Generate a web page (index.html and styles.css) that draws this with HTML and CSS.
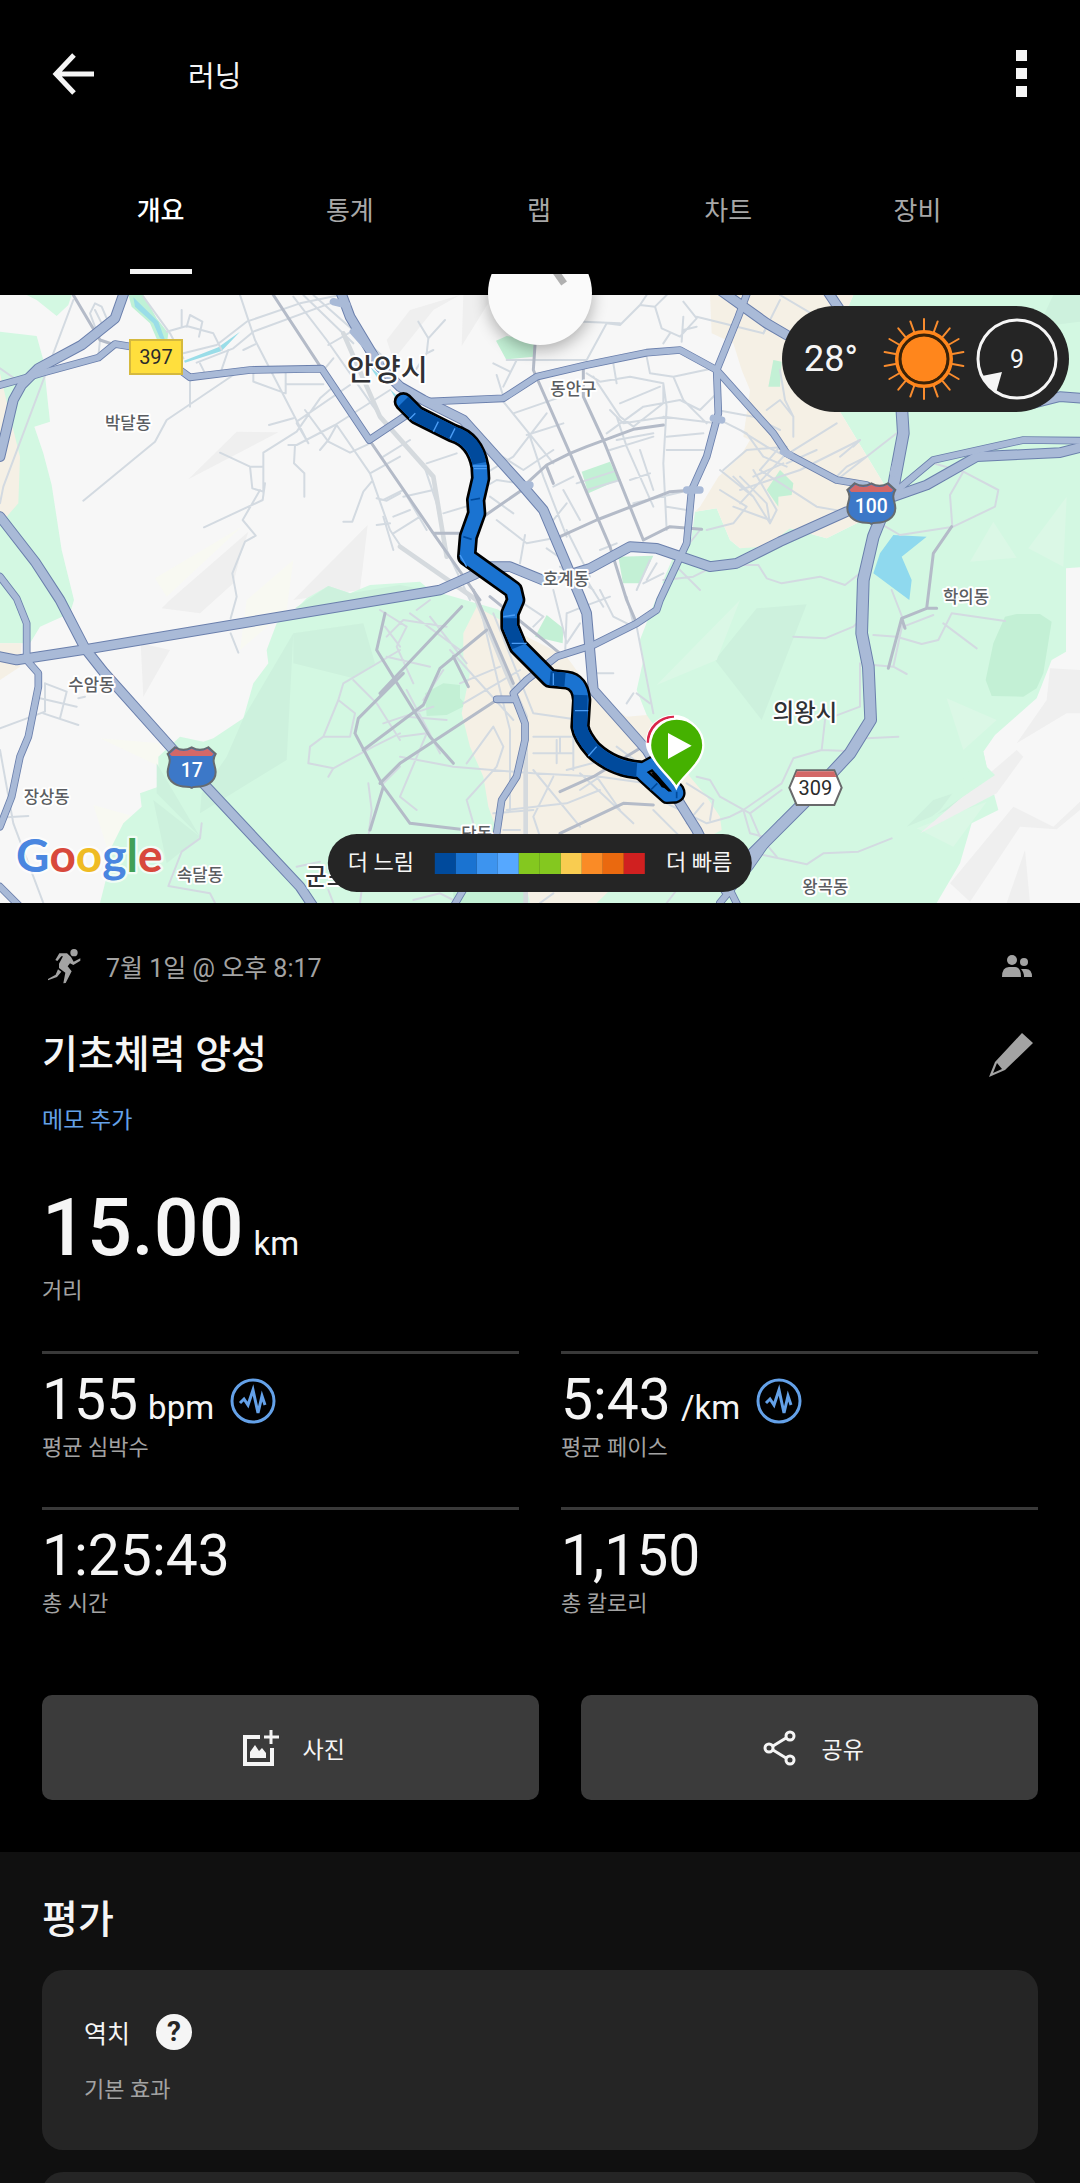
FILE: index.html
```html
<!DOCTYPE html>
<html lang="ko">

<head>
    <meta charset="UTF-8">
    <meta name="viewport" content="width=device-width, initial-scale=1.0">
    <title>러닝</title>
    <link rel="stylesheet" href="styles.css">
</head>

<body>
    <header class="topbar">
        <button class="icon-btn" type="button" aria-label="뒤로">
            <svg width="44" height="44" viewBox="0 0 44 44"><path d="M42 22H5M22 3L4 22l18 19" fill="none" stroke="#f5f5f5" stroke-width="5"/></svg>
        </button>
        <h1>러닝</h1>
        <button class="icon-btn more" type="button" aria-label="더보기">
            <svg width="12" height="48" viewBox="0 0 12 48" fill="#f5f5f5"><path d="M0 0h11v11H0zM0 18h11v11H0zM0 36h11v11H0z"/></svg>
        </button>
    </header>
    <nav class="tabs">
        <a class="active" href="#overview">개요</a>
        <a href="#stats">통계</a>
        <a href="#laps">랩</a>
        <a href="#charts">차트</a>
        <a href="#gear">장비</a>
    </nav>

    <div class="map">
        <svg class="map-canvas" viewBox="0 15 3240 1824" role="img" aria-label="지도">
            <defs>
                <g id="wide">
                    <path d="M375 0L345 85 245 165 115 235 65 285 40 330 0 500"/>
                    <path d="M0 680L105 815 180 930 255 1075 310 1145 520 1380 610 1480 900 1790 940 1850"/>
                    <path d="M0 1100L50 1110 260 1078 1200 920 1320 900 1420 855 1470 830 1530 830 1640 875 1770 835 1890 770 1970 775 2130 830 2210 820 2340 755 2540 665"/>
                    <path d="M1020 0L1050 80 1140 230 1200 290 1270 330 1390 390 1570 590 1630 660 1740 920 1760 970 1780 1200 1940 1380 2090 1620 2150 1740"/>
                    <path d="M2160 0L2300 100 2360 135M2480 0L2520 60"/>
                    <path d="M3100 340L3180 320 3250 325M2680 620L2780 585 2930 500 3180 488 3250 470"/>
                </g>
                <g id="road">
                    <path d="M0 285L55 270 130 248 295 203 345 162 395 170 540 240 570 262 750 240 965 236 1108 450 1220 375"/>
                    <path d="M1280 335L1510 325 1610 260 1760 225 1940 188 2040 180 2150 240 2320 430 2360 490 2510 570 2600 585"/>
                    <path d="M2245 0L2215 80 2150 240 2155 370 2120 500 2075 600 2060 760 1980 930 1970 960 1910 1000 1780 1065 1670 1100 1580 1170 1540 1210 1575 1300 1575 1350 1550 1460 1505 1530 1490 1630 1360 1850"/>
                    <path d="M0 860L50 925 80 1000 80 1110 115 1150 115 1190 85 1340 60 1400 35 1520 0 1610M0 1790L60 1850M1490 1228h50"/>
                    <path d="M2680 610L2800 510 3070 450 3250 452"/>
                    <path d="M2340 1600L2250 1730 2160 1838M2190 1800L2215 1850"/>
                </g>
                <path id="motorway" d="M2705 350L2710 430 2680 590 2620 740 2590 870 2585 1030 2605 1130 2612 1290 2550 1390 2420 1530 2260 1690 2180 1800"/>
                <path id="track" d="M1210 335L1250 375 1360 430Q1425 450 1440 530L1442 565 1427 630 1430 670 1405 740 1400 800 1470 850 1540 900 1547 930 1530 970 1530 1010 1555 1070 1650 1165 1700 1170Q1740 1175 1745 1230L1740 1310Q1745 1340 1780 1380 1840 1435 1920 1440"/>
                <path id="loop" d="M1920 1448L1955 1480 2000 1520 2025 1519Q2040 1515 2032 1500L1960 1418 1920 1440"/>
            </defs>

            <rect y="15" width="3240" height="1824" fill="#f7f7f7"/>
            <!-- 지형 음영 -->
            <g fill="#efefef">
                <path d="M565 568L710 425 835 427ZM510 930L745 725 720 800 700 880 600 970 485 955ZM880 930L1103 705 1080 900ZM1160 150L1230 60 1380 15 1300 60 1180 210ZM1385 168L1390 15H1480ZM422 1060L510 1080 430 1220Z"/>
            </g>
            <path fill="#f8f9f2" d="M465 865L725 710 500 920ZM740 930L880 810 860 960 720 1080ZM280 1545L440 1590 330 1700ZM300 1345L480 1360 480 1430Z"/>

            <!-- 녹지 -->
            <g fill="#d3f8e2">
                <path d="M80 15H215L205 45 170 78 110 30ZM0 125L110 138 130 210 150 395 103 410 130 490 155 585 185 780 222 930 210 970 120 1010 90 1060H0Z"/>
                <path d="M920 925L985 888 1050 910 1110 885 1260 875 1290 900 1500 960 1600 1000 1900 1100 1990 870 2020 800 2075 740 2085 665 2150 655 2190 750 2220 775 2370 715 2480 745 2590 690 2650 580 2520 365 2480 200 2560 15H3240V832L3198 835V1085L3155 1110 3110 1225 2985 1335 2950 1385 2960 1430 2995 1560 2915 1600 2880 1720 2810 1839H300L325 1740 330 1680 370 1600 425 1550 420 1510 475 1490V1400L540 1340 610 1355 640 1345 730 1285 760 1180 805 1120 800 1080 830 1000 885 960Z"/>
            </g>
            <g fill="#cdf1dd">
                <path d="M885 955L985 888 1050 910 1200 885 1280 900 1100 930ZM880 1030L1090 1000 1125 1120 1060 1165 880 1120ZM880 1030L860 1410 600 1570 605 1510 680 1400 730 1285ZM470 1420L600 1640 470 1510ZM460 1530L600 1640 500 1720Z"/>
                <path d="M2145 1110L2270 955 2420 943 2285 1290ZM3115 110L3160 15H3240V95ZM2720 1610L2800 1530 2980 1470 2990 1500Z"/>
                <path fill="#dbf8e6" d="M2910 815L2980 695 3050 803ZM3085 775L3200 620 3190 830ZM2840 1225L2990 1290 2890 1380ZM2750 1615L2960 1535 2860 1670ZM1970 1185L2220 930 2150 1110Z"/>
            </g>
            <g fill="#c3f0d5">
                <path d="M1745 545L1830 515 1855 570 1765 610ZM1488 152L1520 138 1610 150 1600 200 1518 208ZM1855 800L1960 797 1920 880 1875 915Z"/>
                <path d="M1275 1210L1330 1180 1380 1185V1225L1400 1245 1340 1275 1280 1278ZM3015 980L3050 972H3120L3155 995 3130 1150 3110 1195 3070 1220 2975 1218 2957 1170 2980 1060Z"/>
            </g>
            <path fill="#bff1d6" d="M385 15H430L470 85 505 130 500 165H478L450 100 395 50Z"/>

            <!-- 시가지 -->
            <g fill="#f5f0e5">
                <path d="M0 250L40 420 60 500 55 640 20 680H0ZM0 1060H65L60 1130 0 1170Z"/>
                <path d="M2130 15L2135 130 2200 160 2225 240 2250 300 2230 440 2250 450 2220 500 2155 560 2100 650 2085 665 2150 655 2190 750 2220 775 2300 770 2370 715 2480 745 2590 690 2650 580 2520 365 2480 200 2560 15Z"/>
                <path d="M1430 950L1390 1030V1100L1410 1150 1385 1270 1410 1370 1450 1460 1465 1550 1490 1620 1560 1700 1590 1839H1790L1830 1800 2165 1620 2160 1580 2120 1520 2070 1460 1940 1275 1700 1100Z"/>
            </g>
            <path fill="#f7f7f7" d="M1470 930L1600 880H2000L1910 1010 1930 1110 1910 1200 1940 1275 1880 1280 1780 1210 1700 1100 1560 1030Z"/>
            <path fill="#c3f0d5" d="M1640 975L1690 1015 1688 1060 1605 1040ZM2340 540L2380 580 2375 615 2335 620V650L2300 600ZM2320 210L2345 215 2340 290H2305Z"/>
            <path fill="#c3f0d5" d="M1360 1839V1800H1575V1839Z"/>
            <path fill="#efefef" d="M3050 1360L3140 1230 3150 1135 3240 1140V1270H3200ZM2760 1630L3050 1380 3070 1400 2990 1510ZM2850 1780L3040 1550 3160 1610 3240 1535V1560L3170 1618 3060 1610 2910 1835ZM3020 1839L3075 1680 3090 1839Z"/>
            <path fill="#d3f8e2" d="M2750 1615L2985 1455 2960 1430 2950 1385 2820 1560Z"/>

            <!-- 물 -->
            <path fill="#9adde8" d="M400 22L475 95 495 150 480 145 460 100 405 50ZM552 212L655 172 720 125 665 183 555 218ZM1110 230L1145 260 1135 268ZM1170 298L1205 330 1195 340Z"/>
            <path fill="#8fd9ee" d="M2680 735L2780 740 2705 800 2735 870 2728 930 2620 850 2640 790Z"/>

            <!-- 골목길 -->
            <g class="lane">
                <path d="M220 30L10 590 0 640M0 235L50 270M430 20L510 130 550 205M545 60V110M500 125L560 108 640 130 665 180M560 110L570 75 607 95 597 140M300 150L270 70 285 40 305 50 320 85M285 60L310 110M300 150L295 200M550 190L650 165 740 95 900 40 1020 15M590 218L700 175 760 125 990 40"/>
                <path d="M720 15L765 150 925 460 890 400M730 180L765 163M665 238L685 180M600 220L615 250M700 255L500 390 465 455 250 632M570 262V350M760 230V275L857 310V250M860 283H970M660 488L750 530H790M750 530L757 595 790 605M795 580L788 630 612 712M790 610V488L890 425 960 325 1000 290M780 600L728 690 767 737 735 755 697 850 710 920 692 985M692 1030L715 1088M807 405L880 385M865 465H890L1005 405 1170 300M885 465L882 520 913 550V620M890 395L1050 285M915 360L985 455 1050 488 1110 460M960 480L985 450 1010 405 1110 550 1170 720 1200 765M1110 550L1200 500M1115 575L1090 605 1057 695H1030M1130 625L1160 632 1200 610M1130 705L1170 700"/>
                <path d="M880 20L980 150 1120 350 1200 450 1270 520 1310 640 1340 780 1410 930M910 15L1060 160M975 235L1000 205M985 165L1080 110M940 15L1150 200"/>
                <path d="M1255 95L1285 145 1335 90M1285 145L1280 190 1300 180M1280 190L1240 250M1480 220L1530 245M1490 255L1510 320M1550 210L1510 290M1520 210H1760L1820 100 1860 105 1920 45 1940 15M1750 95L1860 100M1920 45L1965 50 2005 10M1965 50L1985 115 2040 140 2090 85 2050 35M1990 160L2010 130M2045 155L2050 80M2090 80L2290 130 2310 90M2050 120L2090 110"/>
                <path d="M1510 335L1660 520M1580 435L1690 400M1540 370L1670 325M1640 370L1540 500 1440 560M1660 480L1570 540 1460 470M1590 440L1630 560 1700 740M1660 590L1720 560M1690 600L1740 690M1700 640L1660 690"/>
                <path d="M1780 260L1860 380 1900 410 1990 340 1990 280 1890 260 1800 275 1760 250M1860 340L1980 290M1850 380L1880 470 1960 650M1820 430L1930 350 2040 330 2100 360 2150 310M1830 360L1870 400 2000 380M1850 450L1960 430M1830 480L1960 440M1990 280L2000 350 1990 520 2000 720M1940 200L1950 250 2020 260 2140 235M1990 380L2150 400M2000 440L2110 430M2000 480H2110M2020 260L2050 330 2120 400M1890 570L1950 550M1900 640L2070 600M1920 480L1960 600M2000 650L2060 660M1840 220L1850 280M1730 580L1840 545M1760 600L1860 570"/>
                <path d="M2140 380L2240 430 2290 500 2360 530M2150 360L2260 380 2340 420M2170 540L2240 480 2360 470M2160 540L2260 620 2310 700 2330 660 2260 540M2160 600L2240 650 2200 700 2120 720M2200 560L2260 620M2200 650L2310 690M2290 130L2340 30M2340 15L2450 80M2340 240L2355 330 2380 380 2380 440M2300 360L2340 330 2380 380M2220 420L2300 470 2340 490M2220 640L2350 500 2510 400M2360 520L2450 480M2220 560L2300 640 2310 700M2220 600L2400 540 2580 450M2500 570L2540 530 2600 500M2510 570L2690 430M2560 470L2580 450"/>
                <path d="M1150 630L1210 600 1280 720M1150 500L1230 450M1280 520L1370 490M1150 680L1180 780M1210 620L1300 600M1180 680L1230 660M1180 730L1260 680M1330 670L1430 640M1440 600L1490 570 1560 580M1470 620L1540 670M1490 690L1580 760 1660 745M1575 735L1560 820M1640 775L1690 810M1700 720L1770 860M1680 830L1780 900M1760 870L1810 950M1800 780L1850 760M1950 810L1910 900M1970 820L1940 870M1990 850L1930 880M2340 470L2280 540"/>
                <path d="M2100 720L2020 820 2100 900M1990 870L2080 860 2140 830M2220 825H2275L2300 865 2345 880 2460 860 2535 885 2580 850M2260 560L2350 520M2580 450L2520 500M2640 700L2700 735 2860 710 2985 650 2995 600 2890 545 2850 615 2857 710M2890 545L2800 520M2280 540L2450 650 2560 670"/>
                <path d="M2380 1040L2475 1045 2560 1010 2590 980M2620 1035L2690 1040 2765 1062 2815 1050 2855 970 3015 993M2830 1000L2930 1075M2620 1125L2680 1130 2720 1152M2675 900L2710 990 2680 1130M2710 1010L2800 975M2580 1120V1250L2500 1280M2475 1290L2465 1380 2540 1383M2465 1380L2380 1405 2345 1480 2230 1560 2250 1630 2290 1640M2600 1345L2695 1340M2290 1695L2420 1723 2470 1690 2575 1685 2675 1645"/>
                <path d="M135 1180L200 1205 180 1285M120 1225L230 1250M130 1270L235 1305M135 1180V1265L0 1315M235 1225L255 1220M0 1380L40 1600 130 1839M20 1582L85 1578M605 1600L600 1645 545 1685 505 1788 630 1810 645 1839M890 1730L960 1715M985 1800L1000 1839"/>
                <path d="M1200 1080L1030 1180 1015 1230 970 1340 930 1370 925 1420 1000 1435 1120 1370 1200 1330M970 1340H1050L1065 1270 1015 1230M1060 1170L1130 1240 1200 1350M1000 1435L985 1460M1155 1010L1200 1070M1105 1480L1115 1560 1080 1839M1150 1480L1200 1430"/>
                <path d="M1140 960L1220 1010 1190 1070 1240 1180M1160 1040L1210 990 1340 1010M1250 960L1290 930M1230 970L1380 1080M1290 980L1400 1120M1160 1100L1290 1130M1330 1140L1270 1230M1380 1180L1500 1130M1390 1240L1560 1140M1150 1300L1300 1250M1160 1330L1220 1280 1340 1290M1200 1340L1280 1330 1200 1520 1250 1560M1400 1420L1480 1310 1510 1370 1490 1430 1400 1530 1420 1600M1200 1400L1360 1430 1600 1450 1800 1460 1940 1480M1220 1200L1320 1390M1440 950L1500 1200 1530 1320 1530 1560M1480 970L1600 1270M1350 1080L1540 1290M1600 1340H1760M1600 1390H1720M1670 1350V1420M1680 1390V1340H1720V1440M1600 1270L1740 1290M1600 1440L1740 1610M1660 1460L1600 1580 1620 1640M1700 1440L1850 1400M1740 1450L1900 1600M1790 1460L1860 1560M1800 1460L1740 1500M1520 1560L1700 1540 1800 1500M1480 1570L1600 1560M1510 1620H1560M1850 1370L1930 1430M1880 1420L2000 1540 2120 1600 2190 1580 2230 1560M1960 1560L2040 1640M2060 1480L2140 1530 2130 1590M2090 1460L2130 1470 2160 1520 2250 1570M2060 1600L2110 1540M2250 1570L2280 1640 2330 1700"/>
                <path d="M1570 940L1630 980 1600 1010M1660 900L1700 1060 1740 1000M1700 970L1750 950 1830 920M1700 970L1695 1100M1800 900L1840 980 1900 1010M1880 920L1900 1000M1910 1010L1960 1270M1790 1150H1840M1910 1210L1950 1240M1880 1240L1900 1210M1720 1180L1780 1220M1240 1830L1320 1810 1360 1830M1620 1839L1660 1810M2000 1839L2030 1800M2250 1570L2345 1500"/>
            </g>
            <path class="rail" d="M1200 770L1430 930 1520 1150 1577 1280V1839M1030 130L1140 380 1300 560 1340 800"/>

            <!-- 간선도로 -->
            <g class="street">
                <path d="M220 15L300 150 345 165M820 15L965 236M1108 450L1300 730 1440 930M1300 730H1400M1605 165L1600 240 1710 490 1830 770 1880 930 1910 1000M1750 225V320L1810 450 1930 750M1580 580L1640 525 1710 490 1760 470 1900 418 1990 405M1450 680L1580 590M1680 740L1790 690 2010 605 2080 600M1930 750L2010 710 2105 718M1640 530L1660 580"/>
                <path d="M1155 970L1130 1080 1290 1340 1360 1420M1140 1210L1385 950M1065 1330L1075 1285 1210 1150M1065 1330L1150 1490 1230 1600 1400 1620M1090 1380L1270 1245 1320 1135 1460 1020M1140 1480L1200 1420 1490 1230M1150 1490L1110 1620M1420 900L1540 1180M1470 920L1680 1090M1680 1630L1870 1540 1960 1545M1680 1505L1780 1460 1920 1375M1360 1100L1405 1190M2855 710L2800 790 2780 955 2705 985 2665 1135M2780 955H2810M2705 985L2715 1015"/>
            </g>

            <use class="wide-edge" href="#wide"/>
            <use class="road-edge" href="#road"/>
            <use class="motorway-edge" href="#motorway"/>
            <use class="wide-fill" href="#wide"/>
            <use class="road-fill" href="#road"/>
            <use class="motorway-fill" href="#motorway"/>
            <path class="ramp" d="M1060 125L1140 215M1000 35L1040 45M1565 585H1590M2140 385L2165 390M2060 600H2100M2350 485L2370 495M2680 550L2690 515"/>

            <!-- 달린 경로 -->
            <use class="track-edge" href="#track"/>
            <use class="loop-edge" href="#loop"/>
            <use class="track-fill" href="#track"/>
            <use class="loop-fill" href="#loop"/>
            <path d="M1952 1446L1968 1450 2006 1498 1985 1492Z"/>
            <path class="track-slow" d="M1210 335L1250 375 1360 430Q1425 450 1438 520M1530 985V1010L1555 1070M1650 1165L1695 1169M1742 1215L1740 1310Q1745 1340 1780 1380 1840 1435 1910 1440"/>
            <g fill="none" stroke="#4b9df5" stroke-width="4">
                <path d="M1228 388L1246 370M1300 425L1315 395M1350 445L1365 415M1418 528H1460M1422 536H1460M1510 980L1545 975M1535 1060H1580M1660 1150V1185M1725 1262H1765M1765 1398L1790 1370M1380 795L1400 830"/>
            </g>
            <path d="M1412 630L1440 625M1390 740L1415 748M1952 1500L1972 1480M2030 1505V1525" fill="none" stroke="#004a9c" stroke-width="5"/>

            <!-- 도착, 출발 핀 -->
            <path d="M2018 1483C2005 1445 1937 1410 1937 1357a83 83 0 0 1 166 0Z" fill="#fff"/>
            <path d="M1944 1358a76 76 0 0 1 78-77" fill="none" stroke="#d9264a" stroke-width="8"/>
            <path d="M2029 1493C2014 1460 1950 1420 1950 1366a80 80 0 0 1 160 0C2110 1420 2044 1460 2029 1493Z" fill="#45b100" stroke="#fff" stroke-width="7"/>
            <path d="M2004 1329L2075 1367 2004 1407Z" fill="#fff"/>

            <!-- 도로 번호 -->
            <rect x="390" y="150" width="156" height="102" fill="#ffdf3d" stroke="#d5b93e" stroke-width="6"/>
            <text class="shield" x="468" y="222">397</text>
            <g id="shield">
                <path d="M525 1372q25 14 50 0 25 14 50 0l22 20c-14 22 0 34 0 54 0 32-32 44-56 44q-16 0-16 6 0-6-16-6c-24 0-56-12-56-44 0-20 14-32 0-54Z" fill="#3c78c8" stroke="#666b70" stroke-width="6"/>
                <path d="M527 1376q24 14 48 0 24 14 48 0l18 16-6 6H515l-6-6Z" fill="#d36868"/>
            </g>
            <use href="#shield" x="2039" y="-792"/>
            <text class="shield light" x="575" y="1460">17</text>
            <text class="shield light" x="2614" y="668">100</text>
            <path d="M2390 1441H2503L2525 1493 2503 1545H2390L2368 1493Z" fill="#fff" stroke="#68696b" stroke-width="6"/>
            <path d="M2391 1444H2502L2509 1461H2384Z" fill="#d36868"/>
            <text class="shield" x="2446" y="1514">309</text>

            <!-- 지명 -->
            <g class="place">
                <text x="384" y="416">박달동</text>
                <text x="1720" y="316">동안구</text>
                <text x="1698" y="886">호계동</text>
                <text x="2898" y="940">학의동</text>
                <text x="274" y="1202">수암동</text>
                <text x="140" y="1538">장상동</text>
                <text x="600" y="1772">속달동</text>
                <text x="2476" y="1810">왕곡동</text>
                <text x="1430" y="1650">당동</text>
                <text class="city" x="1162" y="270">안양시</text>
                <text class="city small" x="2415" y="1292">의왕시</text>
                <text class="city small" x="980" y="1784">군포</text>
            </g>
            <text class="google" x="48" y="1746"><tspan fill="#4a86e0">G</tspan><tspan fill="#d8493c">o</tspan><tspan fill="#efbb23">o</tspan><tspan fill="#4a86e0">g</tspan><tspan fill="#41a057">l</tspan><tspan fill="#d8493c">e</tspan></text>
        </svg>

        <div class="refresh">
            <div class="refresh-ball"></div>
        </div>

        <div class="weather">
            <span class="temp">28°</span>
            <svg width="82" height="82" viewBox="-41 -41 82 82">
                <circle r="23" fill="#ff861c"/>
                <circle r="27" fill="none" stroke="#ff861c" stroke-width="4"/>
                <circle r="24" fill="none" stroke="#3b2207" stroke-width="3"/>
                <g stroke="#f98c2e" stroke-width="2" stroke-linecap="round">
                    <path id="ray" d="M0-29V-40M0 29V40"/>
                    <use href="#ray" transform="rotate(20)"/>
                    <use href="#ray" transform="rotate(40)"/>
                    <use href="#ray" transform="rotate(60)"/>
                    <use href="#ray" transform="rotate(80)"/>
                    <use href="#ray" transform="rotate(100)"/>
                    <use href="#ray" transform="rotate(120)"/>
                    <use href="#ray" transform="rotate(140)"/>
                    <use href="#ray" transform="rotate(160)"/>
                </g>
            </svg>
            <div class="wind">
                <svg width="82" height="82" viewBox="-41 -41 82 82">
                    <circle r="39" fill="none" stroke="#f5f5f5" stroke-width="3"/>
                    <path d="M-35 17L-15 13-21 34Q-30 28-35 17Z" fill="#f5f5f5"/>
                </svg>
                <span>9</span>
            </div>
        </div>

        <div class="legend">
            <span>더 느림</span>
            <div class="scale"><i class="c1"></i><i class="c2"></i><i class="c3"></i><i class="c4"></i><i class="c5"></i><i class="c5"></i><i class="c6"></i><i class="c7"></i><i class="c8"></i><i class="c9"></i></div>
            <span>더 빠름</span>
        </div>
    </div>

    <section class="summary">
        <div class="meta">
            <svg class="runner" width="34" height="36" viewBox="50 53 102 108" fill="#a3a3a3">
                <circle cx="131" cy="67" r="11"/>
                <path d="M87 69H110L122 80 130 94 150 84V91L129 104 119 99 112 108 124 123 106 158 99 159 105 127 86 113V100L98 78H93L81 92 75 89Z"/>
                <path d="M83 117L93 124 80 140 53 150V146L76 133Z"/>
            </svg>
            <span>7월 1일 @ 오후 8:17</span>
            <svg class="friends" width="30" height="24" viewBox="0 0 30 24" fill="#a3a3a3">
                <circle cx="10" cy="6" r="5"/><circle cx="22" cy="8" r="4"/>
                <path d="M0 23q0-10 7-10h6q6 0 6 10zM19 15h5q6 0 6 8h-8q0-5-3-8z"/>
            </svg>
        </div>
        <div class="title-row">
            <h2>기초체력 양성</h2>
            <button class="icon-btn" type="button" aria-label="이름 편집">
                <svg width="44" height="44" viewBox="0 0 44 44"><path fill="#a3a3a3" fill-rule="evenodd" d="M33 0l11 10-28 27L0 44l6-15zM8 30l-4 10 9-4z"/></svg>
            </button>
        </div>
        <a class="memo" href="#memo">메모 추가</a>

        <div class="distance">
            <p class="value">15.00 <small>km</small></p>
            <p class="label">거리</p>
        </div>
        <div class="stats">
            <div class="stat">
                <p class="value">155 <small>bpm</small>
                    <svg class="pulse" width="46" height="46" viewBox="0 0 46 46"><circle cx="23" cy="23" r="21"/><path d="M10 25l4-4 4 6 5-15 5 23 4-17 3 9"/></svg>
                </p>
                <p class="label">평균 심박수</p>
            </div>
            <div class="stat">
                <p class="value">5:43 <small>/km</small>
                    <svg class="pulse" width="46" height="46" viewBox="0 0 46 46"><circle cx="23" cy="23" r="21"/><path d="M10 25l4-4 4 6 5-15 5 23 4-17 3 9"/></svg>
                </p>
                <p class="label">평균 페이스</p>
            </div>
            <div class="stat">
                <p class="value">1:25:43</p>
                <p class="label">총 시간</p>
            </div>
            <div class="stat">
                <p class="value">1,150</p>
                <p class="label">총 칼로리</p>
            </div>
        </div>

        <div class="actions">
            <button class="photo" type="button">
                <svg width="36" height="36" viewBox="0 0 36 36"><path d="M17 7H2v27h27V18" fill="none" stroke="#f5f5f5" stroke-width="4"/><path d="M28 0v14M21 7h15" stroke="#f5f5f5" stroke-width="3"/><path d="M7 28v-6l5-7 4 6 3-3 4 5v5z" fill="#f5f5f5"/></svg>
                사진
            </button>
            <button class="share" type="button">
                <svg width="36" height="36" viewBox="0 0 36 36" fill="none" stroke="#f5f5f5" stroke-width="3"><circle cx="7" cy="18" r="4"/><circle cx="28" cy="6" r="4"/><circle cx="28" cy="30" r="4"/><path d="M11 16L24 8M11 20l13 8"/></svg>
                공유
            </button>
        </div>
    </section>

    <section class="rating">
        <h2>평가</h2>
        <div class="card">
            <div class="card-head">
                <h3>역치</h3>
                <button class="help" type="button" aria-label="도움말">?</button>
            </div>
            <p class="label">기본 효과</p>
        </div>
        <div class="card"></div>
    </section>
</body>

</html>
```

FILE: styles.css
```css
/*
    기본 스타일
*/
* {
    box-sizing: border-box;
    margin: 0;
    padding: 0;
}

body {
    display: flex;
    flex-direction: column;
    height: 100vh;
    overflow: hidden;
    background-color: #000;
    color: #f5f5f5;
    font-family: Roboto, "Noto Sans CJK KR", sans-serif;
    font-size: 23px;
}

button {
    border: 0;
    background: none;
    color: inherit;
    font: inherit;
}

svg {
    display: block;
    flex: none;
}

h1,
h2,
h3 {
    font-weight: 400;
}

/*
    상단바, 탭
*/
.topbar {
    display: flex;
    flex: none;
    align-items: center;
    height: 148px;
    padding: 0 52px;
}

.topbar h1 {
    margin-left: 92px;
    font-size: 29px;
}

.topbar .more {
    margin-left: auto;
}

.tabs {
    display: flex;
    flex: none;
    height: 147px;
    padding: 0 68px 21px 66px;
}

.tabs a {
    display: flex;
    flex: 1;
    justify-content: center;
    color: #a8a8a8;
    font-size: 26px;
    line-height: 126px;
    text-decoration: none;
}

.tabs .active {
    position: relative;
    color: #fff;
    font-weight: 500;
}

.tabs .active::after {
    content: "";
    position: absolute;
    bottom: 0;
    left: 50%;
    width: 62px;
    height: 5px;
    margin-left: -31px;
    background-color: #f5f5f5;
}

/*
    지도
*/
.map {
    position: relative;
    flex: none;
}

.map-canvas {
    width: 100%;
    height: auto;
}

.map-canvas .lane,
.map-canvas .street,
.map-canvas .rail,
.map-canvas .ramp,
.map-canvas use[class] {
    fill: none;
    stroke-linejoin: round;
    stroke-linecap: round;
}

.map-canvas .lane {
    stroke: #d3dae1;
    stroke-width: 6;
}

.map-canvas .rail {
    stroke: #d5dade;
    stroke-width: 14;
}

.map-canvas .street {
    stroke: #b4bbc8;
    stroke-width: 9;
}

.map-canvas .ramp {
    stroke: #a9bad7;
    stroke-width: 22;
}

.map-canvas .wide-edge {
    stroke: #6a7fac;
    stroke-width: 32;
}

.map-canvas .wide-fill {
    stroke: #a9bad7;
    stroke-width: 26;
}

.map-canvas .road-edge {
    stroke: #6a7fac;
    stroke-width: 23;
}

.map-canvas .road-fill {
    stroke: #a9bad7;
    stroke-width: 18;
}

.map-canvas .motorway-edge {
    stroke: #6a7fac;
    stroke-width: 38;
}

.map-canvas .motorway-fill {
    stroke: #a9bad7;
    stroke-width: 32;
}

.map-canvas .track-edge {
    stroke: #000;
    stroke-width: 58;
}

.map-canvas .track-fill {
    stroke: #1a73d1;
    stroke-width: 42;
}

.map-canvas .loop-edge {
    stroke: #000;
    stroke-width: 44;
}

.map-canvas .loop-fill {
    stroke: #1a73d1;
    stroke-width: 30;
}

.map-canvas .track-slow {
    fill: none;
    stroke: #004a9c;
    stroke-width: 42;
    stroke-linejoin: round;
}

.map-canvas text {
    font-family: Roboto, "Noto Sans CJK KR", sans-serif;
    paint-order: stroke;
    stroke-linejoin: round;
}

.map-canvas .place {
    fill: #5a5d61;
    font-size: 50px;
    font-weight: 500;
    stroke: #fff;
    stroke-width: 12;
    text-anchor: middle;
}

.map-canvas .city {
    fill: #303134;
    font-size: 88px;
}

.map-canvas .small {
    font-size: 70px;
}

.map-canvas .shield {
    fill: #2b2b2b;
    font-size: 60px;
    text-anchor: middle;
}

.map-canvas .light {
    fill: #fff;
    font-size: 58px;
    font-weight: 500;
}

.map-canvas .google {
    font-family: Lato, sans-serif;
    font-size: 138px;
    font-weight: 700;
    stroke: #fff;
    stroke-opacity: .7;
    stroke-width: 14;
}

.refresh {
    position: absolute;
    top: -21px;
    left: 50%;
    width: 160px;
    height: 110px;
    margin-left: -80px;
    overflow: hidden;
}

.refresh-ball {
    position: relative;
    width: 104px;
    height: 104px;
    margin: -33px auto 0;
    border-radius: 50%;
    background-color: #fafafa;
    box-shadow: 0 5px 16px rgba(0, 0, 0, .3);
}

.refresh-ball::after {
    content: "";
    position: absolute;
    top: 28px;
    left: 68px;
    width: 7px;
    height: 16px;
    background-color: #b0b0b0;
    transform: rotate(-35deg);
}

.weather {
    position: absolute;
    top: 11px;
    right: 11px;
    display: flex;
    align-items: center;
    height: 106px;
    padding: 0 11px 0 22px;
    border-radius: 53px;
    background-color: #252525;
}

.weather .temp {
    width: 79px;
    font-size: 36px;
}

.wind {
    display: grid;
    place-items: center;
    margin-left: 11px;
    font-size: 25px;
}

.wind > * {
    grid-area: 1 / 1;
}

.legend {
    position: absolute;
    bottom: 11px;
    left: 50%;
    display: flex;
    align-items: center;
    gap: 21px;
    height: 58px;
    padding: 0 20px;
    border-radius: 29px;
    background-color: #252525;
    font-size: 22px;
    line-height: 58px;
    white-space: nowrap;
    transform: translateX(-50%);
}

.scale {
    display: flex;
}

.scale i {
    width: 21px;
    height: 21px;
}

.c1 { background-color: #004a9c; }
.c2 { background-color: #1a73d1; }
.c3 { background-color: #3d94ef; }
.c4 { background-color: #56a8ff; }
.c5 { background-color: #84c81f; }
.c6 { background-color: #f9cc50; }
.c7 { background-color: #fa8b26; }
.c8 { background-color: #ea690f; }
.c9 { background-color: #d02020; }

/*
    활동 요약
*/
.summary {
    flex: none;
    padding: 42px 42px 52px;
}

.meta {
    display: flex;
    align-items: center;
    height: 42px;
    color: #a3a3a3;
    font-size: 25px;
}

.meta .runner {
    margin: 0 25px 0 5px;
}

.meta .friends {
    margin: 0 6px 0 auto;
}

.title-row {
    display: flex;
    align-items: center;
    justify-content: space-between;
    height: 56px;
    margin-top: 40px;
}

.title-row h2,
.rating h2 {
    font-size: 39px;
    font-weight: 500;
    line-height: 56px;
}

.title-row .icon-btn {
    margin-right: 5px;
}

.memo {
    display: block;
    margin-top: 22px;
    color: #64a1e8;
    line-height: 32px;
    text-decoration: none;
}

.label {
    color: #a3a3a3;
    font-size: 22px;
    line-height: 32px;
}

.value {
    display: flex;
    align-items: baseline;
    height: 64px;
    font-size: 57px;
    line-height: 64px;
}

.value small {
    margin-left: 10px;
    font-size: 33px;
}

.distance {
    margin-top: 44px;
}

.distance .value {
    height: 94px;
    font-size: 79px;
    font-weight: 500;
    line-height: 94px;
}

.distance .value small {
    font-weight: 400;
}

.stats {
    display: grid;
    grid-template-columns: 1fr 1fr;
    column-gap: 42px;
    margin-top: 44px;
}

.stat {
    height: 156px;
    padding-top: 14px;
    border-top: 3px solid #393939;
}

.pulse {
    align-self: center;
    margin: 2px 0 0 16px;
    fill: none;
    stroke: #64a1e8;
    stroke-width: 3;
}

.actions {
    display: flex;
    gap: 42px;
    margin-top: 32px;
}

.actions button {
    display: flex;
    align-items: center;
    justify-content: center;
    gap: 24px;
    height: 105px;
    padding-left: 6px;
    border-radius: 10px;
    background-color: #3b3b3b;
}

.actions .photo {
    flex: 12;
}

.actions .share {
    flex: 11;
}

/*
    평가
*/
.rating {
    flex: 1;
    min-height: 0;
    overflow: hidden;
    padding: 40px 42px 0;
    background-color: #101010;
}

.card {
    height: 180px;
    margin-top: 22px;
    padding: 42px;
    border-radius: 21px;
    background-color: #252525;
}

.card-head {
    display: flex;
    align-items: center;
    gap: 26px;
    height: 40px;
}

.card-head h3 {
    font-size: 25px;
}

.card .label {
    margin-top: 22px;
}

.help {
    width: 36px;
    height: 36px;
    border-radius: 50%;
    background-color: #f5f5f5;
    color: #252525;
    font-size: 28px;
    font-weight: 700;
    line-height: 36px;
}
```
